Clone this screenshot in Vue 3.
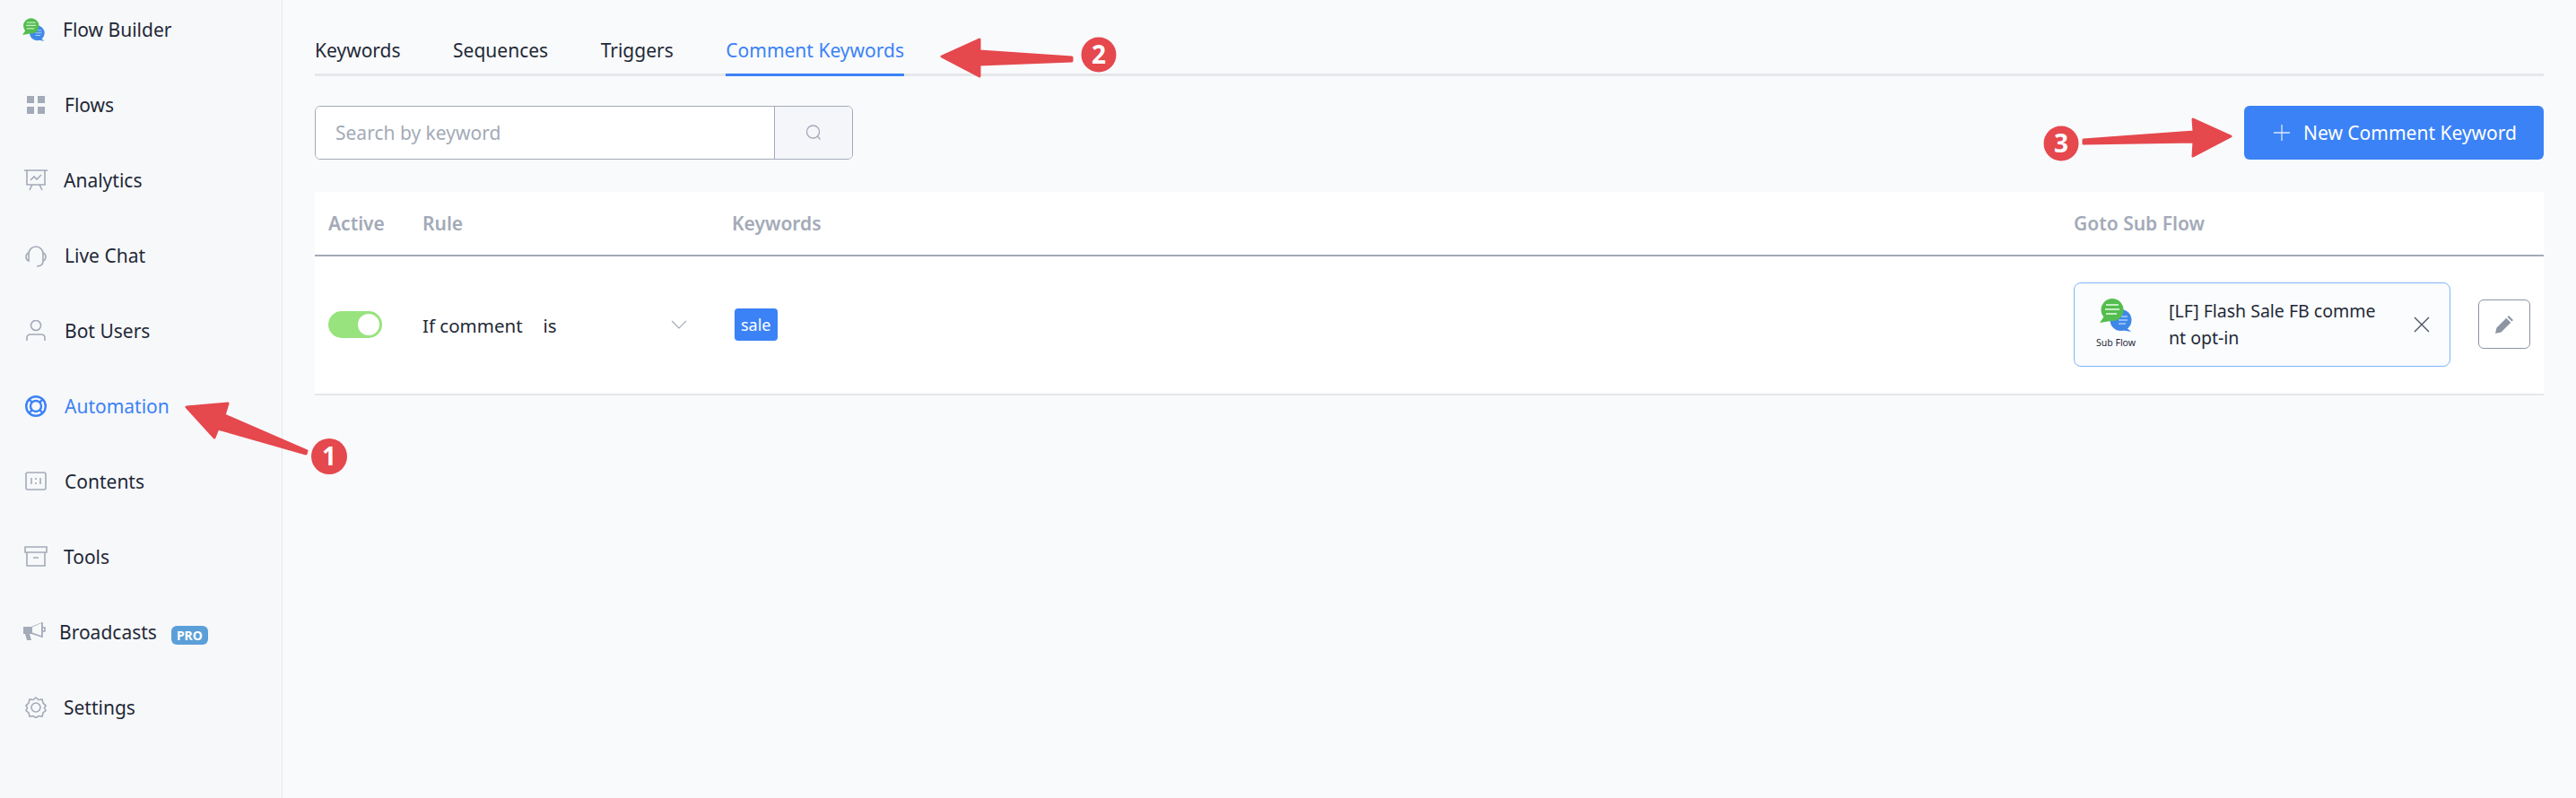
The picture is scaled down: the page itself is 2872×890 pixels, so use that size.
<template>
  <div class="page">
    <!-- Sidebar -->
    <aside class="sidebar">
      <a
        v-for="item in navItems"
        :key="item.label"
        class="nav-item"
        :class="[item.icon, { active: item.active }]"
      >
        <span class="nav-icon">
          <svg v-if="item.icon === 'builder'" width="25" height="26" viewBox="0 0 36 37">
            <circle cx="23.500" cy="24" r="12" fill="#3f88e8" />
            <path d="M27 30l8 7-11-2z" fill="#3f88e8" />
            <path d="M24 20h7M21 24h10M21 28h8" stroke="#a9cdf6" stroke-width="1.500" />
            <circle cx="14" cy="12.500" r="12.500" fill="#54bd4f" />
            <path d="M6 18L0 27l12-2z" fill="#54bd4f" />
            <path d="M7 7h14M6 12h16M7 17h12" stroke="#c6ecc3" stroke-width="1.800" />
          </svg>
          <svg v-else-if="item.icon === 'flows'" width="22" height="22" viewBox="0 0 22 22" fill="#a3aab8">
            <rect x="1" y="1" width="8" height="8" />
            <rect x="13" y="1" width="8" height="8" />
            <rect x="1" y="13" width="8" height="8" />
            <rect x="13" y="13" width="8" height="8" />
          </svg>
          <svg v-else-if="item.icon === 'analytics'" class="line-icon" width="26" height="24" viewBox="0 0 26 24">
            <path d="M0 1h26M3 1v16h20V1M7 12l4-4 3 3 5-5M9 17l-3 6M17 17l3 6" />
          </svg>
          <svg v-else-if="item.icon === 'chat'" class="line-icon" width="24" height="25" viewBox="0 0 24 25">
            <path d="M4 10a8 8 0 0 1 16 0M4 9Q1 10 1 13.500t3 4.500zM20 9q3 1 3 4.500t-3 4.500zM20 18q0 6-7 6" />
          </svg>
          <svg v-else-if="item.icon === 'users'" class="line-icon" width="22" height="24" viewBox="0 0 22 24">
            <circle cx="11" cy="6" r="5.500" />
            <path d="M1 23v-3q0-4 4-4h12q4 0 4 4v3" />
          </svg>
          <svg v-else-if="item.icon === 'automation'" class="line-icon" width="24" height="24" viewBox="0 0 24 24">
            <circle cx="12" cy="12" r="10.800" />
            <circle cx="12" cy="12" r="6" />
            <path d="M4.500 4.500l3.500 3.500M19.500 4.500L16 8M4.500 19.500L8 16M19.500 19.500L16 16" />
          </svg>
          <svg v-else-if="item.icon === 'contents'" class="line-icon" width="24" height="22" viewBox="0 0 24 22">
            <rect x="1" y="1" width="22" height="19" rx="2" />
            <path d="M7 7v7M12 7v2M12 12v2M17 7v7" />
          </svg>
          <svg v-else-if="item.icon === 'tools'" class="line-icon" width="26" height="24" viewBox="0 0 26 24">
            <path d="M1 1h24v6H1zM3 7v15h20V7M10 13h6" />
          </svg>
          <svg v-else-if="item.icon === 'broadcasts'" width="26" height="24" viewBox="0 0 26 24">
            <path d="M1 6h9l12-5v17L10 14H8l2 7H5L3 14H1z" fill="#a3aab8" />
            <path d="M11 6.500l10-4.500v14l-10-3.500z" fill="#f7f8fa" />
            <path d="M22 1v17M22 7h3v4h-3" fill="none" stroke="#a3aab8" stroke-width="1.600" />
          </svg>
          <svg v-else class="line-icon" width="24" height="24" viewBox="0 0 24 24">
            <circle cx="12" cy="12" r="5" />
            <path d="M12 1l3 2.500 4-.5 1 4 3 3-1.500 2.500 1.500 3-3 2.500-1 4-4-.5-3 2-3-2-4 .5-1-4-3-2.500L2.500 12 1 10l3-3 1-4 4 .5z" />
          </svg>
        </span>
        <span class="nav-label">{{ item.label }}</span>
        <span v-if="item.pro" class="pro-badge">PRO</span>
      </a>
    </aside>

    <!-- Main -->
    <main class="main">
      <nav class="tabs">
        <a v-for="tab in tabs" :key="tab" class="tab" :class="{ active: tab === 'Comment Keywords' }">{{ tab }}</a>
      </nav>

      <div class="toolbar">
        <div class="search">
          <input class="search-input" type="text" placeholder="Search by keyword" />
          <button class="search-button">
            <svg width="20" height="20" viewBox="0 0 20 20" fill="none" stroke="#a3aab8" stroke-width="1.300">
              <circle cx="9.500" cy="9" r="7" />
              <path d="M14.500 14l3 3.500" />
            </svg>
          </button>
        </div>
        <button class="new-button">
          <svg width="18" height="18" viewBox="0 0 18 18" stroke="#dbe8fd" stroke-width="1.300">
            <path d="M9 0v18M0 9h18" />
          </svg>
          New Comment Keyword
        </button>
      </div>

      <section class="table">
        <div class="grid table-head">
          <div>Active</div>
          <div>Rule</div>
          <div>Keywords</div>
          <div>Goto Sub Flow</div>
        </div>
        <div class="grid table-row">
          <div><span class="toggle"><span class="knob"></span></span></div>
          <div class="rule">
            <span>If comment</span>
            <span class="rule-op">is</span>
            <svg class="chevron" width="18" height="10" viewBox="0 0 18 10" fill="none" stroke="#a3aab8" stroke-width="1.200">
              <path d="M1 1l8 8 8-8" />
            </svg>
          </div>
          <div><span class="tag">sale</span></div>
          <div class="goto">
            <div class="flow-card">
              <div class="flow-type">
                <svg width="36" height="37" viewBox="0 0 36 37">
                  <circle cx="23.500" cy="24" r="12" fill="#3f88e8" />
                  <path d="M27 30l8 7-11-2z" fill="#3f88e8" />
                  <path d="M24 20h7M21 24h10M21 28h8" stroke="#a9cdf6" stroke-width="1.500" />
                  <circle cx="14" cy="12.500" r="12.500" fill="#54bd4f" />
                  <path d="M6 18L0 27l12-2z" fill="#54bd4f" />
                  <path d="M7 7h14M6 12h16M7 17h12" stroke="#c6ecc3" stroke-width="1.800" />
                </svg>
                <span class="flow-type-label">Sub Flow</span>
              </div>
              <div class="flow-name">[LF] Flash Sale FB comme<br />nt opt-in</div>
              <svg class="flow-close" width="18" height="18" viewBox="0 0 18 18" stroke="#4b5563" stroke-width="1.400">
                <path d="M1 1l16 16M17 1L1 17" />
              </svg>
            </div>
            <button class="edit-button">
              <svg width="20" height="20" viewBox="0 0 20 20" fill="#8d95a3">
                <path d="M15 0l5 5-1.500 1.500-5-5zM12.300 2.700l5 5L6.500 18.500 0 20l1.500-6.500z" />
              </svg>
            </button>
          </div>
        </div>
      </section>
    </main>

    <!-- Annotations drawn over the screenshot -->
    <svg class="annotations" width="2872" height="890" viewBox="0 0 2872 890">
      <g fill="#e5484d" stroke="#e5484d" stroke-width="3" stroke-linejoin="round">
        <path d="M208 454L254 450 250 463 342 503 341 506 243 478 239 488z" />
        <path d="M1050 63L1092 44V57L1195 64V68L1092 72V85z" />
        <path d="M2487 152L2445 133 2446 147 2323 156V160L2446 158 2445 174z" />
      </g>
      <g fill="#e5484d">
        <circle cx="367" cy="509" r="20" />
        <circle cx="1225" cy="61" r="19.500" />
        <circle cx="2298" cy="160" r="19.500" />
      </g>
      <g class="badge-text" fill="#fff" text-anchor="middle">
        <text x="367" y="519">1</text>
        <text x="1225" y="71">2</text>
        <text x="2298" y="170">3</text>
      </g>
    </svg>
  </div>
</template>

<script setup>
const navItems = [
  { label: 'Flow Builder', icon: 'builder' },
  { label: 'Flows', icon: 'flows' },
  { label: 'Analytics', icon: 'analytics' },
  { label: 'Live Chat', icon: 'chat' },
  { label: 'Bot Users', icon: 'users' },
  { label: 'Automation', icon: 'automation', active: true },
  { label: 'Contents', icon: 'contents' },
  { label: 'Tools', icon: 'tools' },
  { label: 'Broadcasts', icon: 'broadcasts', pro: true },
  { label: 'Settings', icon: 'settings' }
]

const tabs = ['Keywords', 'Sequences', 'Triggers', 'Comment Keywords']
</script>

<style>
html,
body {
  margin: 0;
  background: #f9fafc;
}
</style>

<style scoped>
.page {
  position: relative;
  display: flex;
  width: 2872px;
  height: 890px;
  overflow: hidden;
  background: #f9fafc;
  color: #1f2937;
  font-family: "Noto Sans", "Open Sans", sans-serif;
  font-size: 21px;
}

.sidebar {
  box-sizing: border-box;
  flex: none;
  display: flex;
  flex-direction: column;
  gap: 38px;
  width: 315px;
  padding-top: 10px;
  background: #f7f8fa;
  border-right: 1px solid #e5e7eb;
}

.nav-item {
  display: flex;
  align-items: center;
  gap: 16px;
  height: 46px;
  padding-left: 24px;
}

.nav-item.active {
  color: #3b82f6;
}

.nav-item.active .line-icon {
  stroke: #3b82f6;
  stroke-width: 2.400;
}

.nav-item.builder .nav-icon svg {
  margin-left: -6px;
}

.nav-item.builder .nav-label {
  margin-left: -2px;
}

.nav-item.analytics .nav-label,
.nav-item.tools .nav-label,
.nav-item.settings .nav-label {
  margin-left: -1px;
}

.nav-item.broadcasts {
  padding-left: 22px;
}

.nav-item.broadcasts .nav-label {
  margin-left: -4px;
}

.nav-icon {
  flex: none;
  display: flex;
  align-items: center;
  justify-content: center;
  width: 32px;
}

.line-icon {
  fill: none;
  stroke: #a3aab8;
  stroke-width: 1.600;
}

.pro-badge {
  margin: 6px 0 0 0;
  padding: 0 6px;
  border-radius: 6px;
  background: #5b9fd8;
  color: #fff;
  font-size: 14px;
  font-weight: 700;
  line-height: 21px;
}

.main {
  flex: 1;
  min-width: 0;
  padding: 0 36px;
}

.tabs {
  display: flex;
  gap: 58.500px;
  height: 85px;
  box-sizing: border-box;
  padding-top: 40px;
  border-bottom: 3px solid #e5e7eb;
}

.tab {
  height: 42px;
  line-height: 32px;
  white-space: nowrap;
}

.tab.active {
  color: #3b82f6;
  border-bottom: 3px solid #3b82f6;
}

.toolbar {
  display: flex;
  justify-content: space-between;
  margin-top: 33px;
}

.search {
  box-sizing: border-box;
  display: flex;
  width: 600px;
  height: 60px;
  border: 1px solid #a3aab8;
  border-radius: 6px;
  overflow: hidden;
}

.search-input {
  flex: 1;
  min-width: 0;
  padding: 0 22px;
  border: none;
  outline: none;
  background: #fff;
  font: inherit;
  color: #1f2937;
}

.search-input::placeholder {
  color: #a3aab8;
  opacity: 1;
}

.search-button {
  flex: none;
  width: 87px;
  display: flex;
  align-items: center;
  justify-content: center;
  padding: 0;
  border: none;
  border-left: 1px solid #a3aab8;
  background: #f5f6f9;
}

.new-button {
  display: flex;
  align-items: center;
  gap: 15px;
  box-sizing: border-box;
  width: 334px;
  height: 60px;
  padding: 0 0 0 33px;
  border: none;
  border-radius: 6px;
  background: #3b82f6;
  color: #fff;
  font: inherit;
}

.table {
  margin-top: 36px;
  background: #fff;
}

.grid {
  display: grid;
  grid-template-columns: 120px 345px 1fr 524px;
  align-items: center;
}

.grid > :first-child {
  padding-left: 15px;
}

.table-head {
  height: 72px;
  border-bottom: 2px solid #a3aab8;
  box-sizing: border-box;
  color: #a3aab8;
  font-weight: 600;
}

.table-row {
  height: 155px;
  padding-bottom: 2px;
  box-sizing: border-box;
  border-bottom: 2px solid #e5e7eb;
}

.toggle {
  display: block;
  position: relative;
  width: 60px;
  height: 30px;
  border-radius: 15px;
  background: #98e37e;
}

.knob {
  position: absolute;
  top: 3px;
  right: 3px;
  width: 24px;
  height: 24px;
  border-radius: 50%;
  background: #fff;
}

.rule {
  position: relative;
  display: flex;
  align-items: center;
  padding-top: 3px;
  font-size: 20.500px;
}

.rule-op {
  margin-left: 23px;
}

.chevron {
  position: absolute;
  left: 277px;
  top: 11px;
}

.tag {
  display: inline-block;
  margin-left: 3px;
  padding: 0 7px;
  border-radius: 4px;
  background: #3b82f6;
  color: #fff;
  font-size: 18px;
  line-height: 36px;
}

.goto {
  display: flex;
  align-items: center;
  gap: 31px;
}

.flow-card {
  box-sizing: border-box;
  display: flex;
  align-items: center;
  width: 420px;
  height: 94px;
  border: 1.500px solid #7fb3f7;
  border-radius: 8px;
  background: #fbfcfe;
}

.flow-type {
  flex: none;
  display: flex;
  flex-direction: column;
  align-items: center;
  width: 92px;
}

.flow-type-label {
  margin-top: 4px;
  font-size: 10.500px;
  line-height: 16px;
}

.flow-name {
  flex: 1;
  margin-left: 13px;
  font-size: 19.500px;
  line-height: 30px;
  white-space: nowrap;
}

.flow-close {
  margin-right: 22px;
}

.edit-button {
  flex: none;
  display: flex;
  align-items: center;
  justify-content: center;
  box-sizing: border-box;
  width: 58px;
  height: 55px;
  padding: 0;
  border: 1px solid #8d95a3;
  border-radius: 6px;
  background: #fff;
}

.annotations {
  position: absolute;
  top: 0;
  left: 0;
  pointer-events: none;
}

.badge-text {
  font-size: 28px;
  font-weight: 700;
}
</style>
